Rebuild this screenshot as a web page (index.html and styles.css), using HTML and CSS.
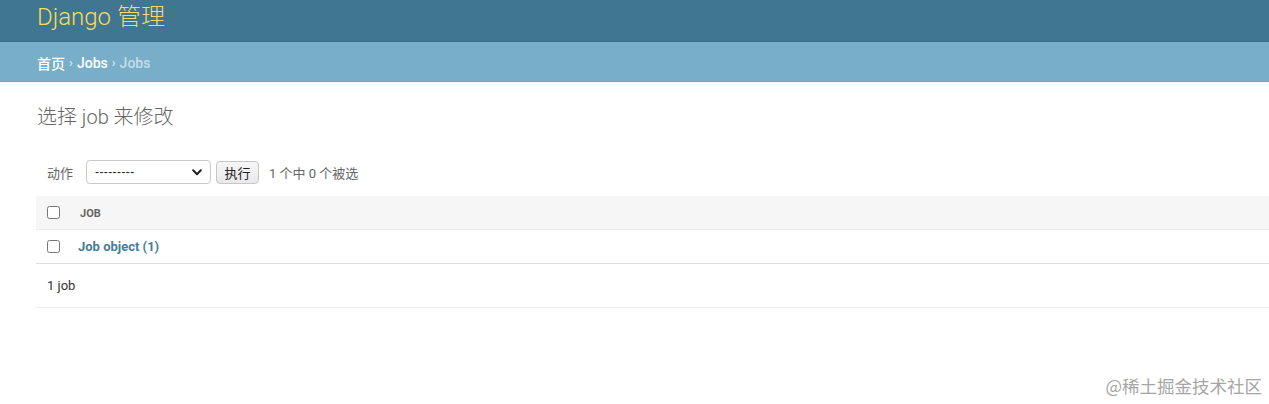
FILE: index.html
```html
<!DOCTYPE html>
<html lang="zh-CN">
<head>
<meta charset="utf-8">
<title>选择 job 来修改 | Django 站点管理员</title>
<link rel="stylesheet" href="styles.css">
</head>
<body>
<div class="header">
  <div class="branding">Django 管理</div>
</div>
<div class="breadcrumbs">
  <a class="crumb" href="#">首页</a><span class="sep">›</span><a class="crumb" href="#">Jobs</a><span class="sep">›</span><span class="current">Jobs</span>
</div>
<div class="content">
  <h1 class="title">选择 job 来修改</h1>
  <div class="actions">
    <span class="label">动作</span>
    <div class="select">
      <span class="select-text">---------</span>
      <svg class="chevron" width="10" height="7" viewBox="0 0 10 7"><path d="M1.2 1.3 L5 5.2 L8.8 1.3" fill="none" stroke="#222" stroke-width="2" stroke-linecap="round" stroke-linejoin="round"/></svg>
    </div>
    <button class="go">执行</button>
    <span class="counter">1 个中 0 个被选</span>
  </div>
  <div class="results">
    <div class="row head">
      <div class="cell-check"><input type="checkbox"></div>
      <div class="col-title">JOB</div>
    </div>
    <div class="row item">
      <div class="cell-check"><input type="checkbox"></div>
      <a class="item-link" href="#">Job object (1)</a>
    </div>
  </div>
  <div class="paginator">1 job</div>
</div>
<div class="watermark">@稀土掘金技术社区</div>
</body>
</html>
```
FILE: styles.css
```css
html, body {
  margin: 0;
  padding: 0;
  background: #fff;
  font-family: Roboto, "Noto Sans CJK SC", "Lucida Grande", Verdana, sans-serif;
  color: #333;
  font-size: 14px;
}
.header {
  height: 41px;
  background: #417690;
  border-bottom: 1px solid #3b6f88;
  display: flex;
  align-items: center;
  padding: 0 37px;
}
.branding {
  color: #f5dd5d;
  font-size: 24px;
  font-weight: 300;
  line-height: 1;
  margin-top: -7px;
}
.breadcrumbs {
  background: #79aec8;
  border-bottom: 1px solid #6fa2bb;
  display: flex;
  align-items: center;
  padding: 2px 37px 0;
  box-sizing: border-box;
  height: 40px;
  font-size: 14px;
  color: #fff;
}
.crumb {
  color: #fff;
  text-decoration: none;
  font-weight: 500;
}
.sep {
  color: #e6f0f5;
  margin: 0 4px;
  font-size: 13px;
}
.current {
  color: #c4dce8;
  font-weight: 500;
}
.content {
  padding: 0 0 0 36px;
}
.title {
  margin: 23px 0 0 1px;
  font-size: 20px;
  font-weight: 300;
  line-height: 24px;
  color: #666;
}
.actions {
  display: flex;
  align-items: center;
  margin-top: 31px;
  padding-left: 11px;
  height: 24px;
  font-size: 13px;
  color: #666;
}
.label {
  margin-right: 13px;
}
.select {
  box-sizing: border-box;
  width: 125px;
  height: 24px;
  border: 1px solid #c9c9c9;
  border-radius: 4px;
  display: flex;
  align-items: center;
  justify-content: space-between;
  padding: 0 8px 0 8px;
  color: #222;
  font-size: 12px;
  background: #fff;
}
.select-text {
  letter-spacing: 0.4px;
  font-family: "Liberation Sans", sans-serif;
}
.chevron {
  display: block;
}
.go {
  box-sizing: border-box;
  margin-left: 5px;
  height: 23px;
  width: 43px;
  border: 1px solid #c6c6c6;
  border-radius: 4px;
  background: linear-gradient(#f6f6f6, #e9e9e9);
  font-family: inherit;
  font-size: 13px;
  color: #222;
  padding: 0;
}
.counter {
  margin-left: 10px;
  color: #666;
}
.results {
  margin-top: 12px;
}
.row {
  display: flex;
  align-items: center;
}
.head {
  height: 33px;
  background: #f6f6f6;
  border-bottom: 1px solid #eee;
}
.item {
  height: 33px;
  border-bottom: 1px solid #ddd;
}
.cell-check {
  width: 42px;
  display: flex;
  align-items: center;
  padding-left: 7px;
  box-sizing: border-box;
}
.cell-check input {
  margin: 0 0 0 4px;
  width: 13px;
  height: 13px;
}
.col-title {
  font-size: 11px;
  font-weight: 700;
  color: #666;
  margin-left: 2px;
  margin-top: 2px;
}
.item-link {
  color: #447e9b;
  font-weight: 700;
  font-size: 13px;
  text-decoration: none;
}
.paginator {
  height: 43px;
  border-bottom: 1px solid #eee;
  display: flex;
  align-items: center;
  padding-left: 11px;
  font-size: 13px;
  color: #333;
}
.watermark {
  position: absolute;
  right: 7px;
  top: 373px;
  font-size: 17.5px;
  color: #a6a6a6;
  font-family: "Noto Sans CJK SC", sans-serif;
  letter-spacing: 0;
}
```
